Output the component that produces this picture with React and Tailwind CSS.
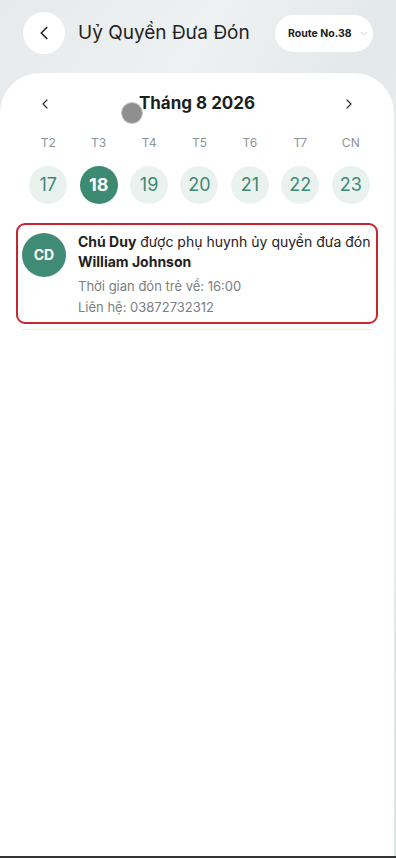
import { ChevronLeft, ChevronRight, ChevronDown } from "lucide-react";

const weekDays = [
  { label: "T2", day: 17 },
  { label: "T3", day: 18 },
  { label: "T4", day: 19 },
  { label: "T5", day: 20 },
  { label: "T6", day: 21 },
  { label: "T7", day: 22 },
  { label: "CN", day: 23 },
];

const selectedDay = 18;

function Header() {
  return (
    <header className="flex h-[73px] items-start justify-between pl-[23px] pr-[23px] pt-[12px]">
      <div className="flex items-center">
        <button className="flex h-[42px] w-[42px] items-center justify-center rounded-full bg-white text-[#222]">
          <ChevronLeft size={22} strokeWidth={1.8} />
        </button>
        <h1 className="ml-[13px] text-[19px] text-[#1f2222]">Uỷ Quyền Đưa Đón</h1>
      </div>
      <button className="mt-[3px] flex h-[37px] w-[98px] items-center rounded-full bg-white pl-[13px]">
        <span className="text-[10.5px] font-bold text-[#222]">Route No.38</span>
        <ChevronDown size={11} strokeWidth={1.5} className="ml-[6px] text-[#b5b9b9]" />
      </button>
    </header>
  );
}

function CalendarStrip() {
  return (
    <section className="pl-[23px] pr-[18px] pt-[18px]">
      <div className="relative mr-[5px] flex items-center justify-between px-[14px]">
        <ChevronLeft size={16} strokeWidth={1.8} className="text-[#333]" />
        <h2 className="text-[17px] font-bold text-[#1d1f1f]">Tháng 8 2026</h2>
        <ChevronRight size={16} strokeWidth={1.8} className="text-[#333]" />
        <span className="absolute left-[98px] top-[11px] h-[22px] w-[22px] rounded-full border border-[#c9c9c9] bg-[#8f8f8f]" />
      </div>
      <div className="mt-[17px] grid grid-cols-7">
        {weekDays.map((d) => (
          <div key={d.label} className="flex flex-col items-center">
            <span className="text-[12px] text-[#8b9497]">{d.label}</span>
            <span
              className={
                d.day === selectedDay
                  ? "mt-[14px] flex h-[38px] w-[38px] items-center justify-center rounded-full bg-[#3d8a73] text-[18px] font-bold text-white"
                  : "mt-[14px] flex h-[38px] w-[38px] items-center justify-center rounded-full bg-[#eaf2ef] text-[18px] text-[#3d8a73]"
              }
            >
              {d.day}
            </span>
          </div>
        ))}
      </div>
    </section>
  );
}

function PickupCard() {
  return (
    <div className="mx-[16px] mt-[19px]">
      <div className="flex rounded-[9px] border-2 border-[#c9252d] px-[4px] pb-[4px] pt-[7px]">
        <div className="mt-[1px] flex h-[44px] w-[44px] shrink-0 items-center justify-center rounded-full bg-[#3f8b75] text-[14px] font-bold text-white">
          CD
        </div>
        <div className="ml-[12px] leading-[20px]">
          <p className="text-[14px] text-[#1f2222]">
            <span className="font-bold">Chú Duy</span> được phụ huynh ủy quyền đưa đón{" "}
            <span className="font-bold">William Johnson</span>
          </p>
          <p className="mt-[4px] text-[13px] leading-[21px] text-[#7b8082]">Thời gian đón trẻ về: 16:00</p>
          <p className="text-[13px] leading-[21px] text-[#7b8082]">Liên hệ: 03872732312</p>
        </div>
      </div>
      <div className="mx-[6px] mt-[5px] h-px bg-[#ececec]" />
    </div>
  );
}

export default function App() {
  return (
    <main
      className="flex h-[858px] flex-col bg-[linear-gradient(120deg,#e6eaea_0%,#eef1f1_25%,#e3e8e8_45%,#edf0f0_65%,#dde4e4_100%)]"
      style={{ fontFamily: "Inter, 'Noto Sans', sans-serif" }}
    >
      <Header />
      <div className="mr-[2px] flex-1 rounded-t-[40px] bg-white">
        <CalendarStrip />
        <PickupCard />
      </div>
      <div className="h-[2px] bg-[#333]" />
    </main>
  );
}
